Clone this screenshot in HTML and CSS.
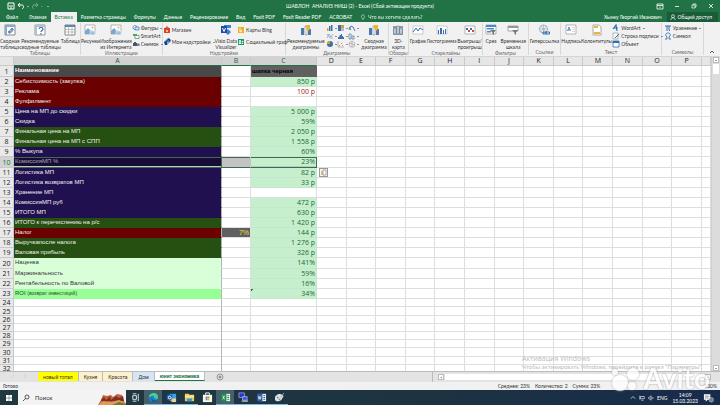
FILE: index.html
```html
<!DOCTYPE html>
<html lang="ru">
<head>
<meta charset="utf-8">
<title>ШАБЛОН АНАЛИЗ НИШ (2) - Excel</title>
<link rel="stylesheet" href="styles.css">
</head>
<body>
<svg class="sprite" aria-hidden="true">
  <symbol id="pivot" viewBox="0 0 12 12"><path d="M1 1h10v10H1z" fill="#fff" stroke="#888"/><path d="M1 1h10v2H1zM1 1h2v10H1z" fill="#8ea9c4"/><path d="M5 8h3V5M4 8l2-1.500v3zM8 4l-1.500 2h3z" fill="none" stroke="#2b6cb0" stroke-width=".8"/></symbol>
  <symbol id="pivotq" viewBox="0 0 12 12"><path d="M1 1h10v10H1z" fill="#fff" stroke="#999"/><path d="M1 1h10v2H1zM1 1h2v10H1z" fill="#b4c0cc"/><path d="M5 5c0-2 4-2 4 0 0 1.500-2 1.500-2 3M7 9v1.500" fill="none" stroke="#2b6cb0" stroke-width="1.200"/></symbol>
  <symbol id="table" viewBox="0 0 12 12"><path d="M1 1h10v10H1z" fill="#fff" stroke="#888"/><path d="M1 1h10v2H1z" fill="#4e86b8"/><path d="M1 5.500h10M1 8h10M4.500 1v10M8 1v10" stroke="#999" stroke-width=".6"/></symbol>
  <symbol id="picture" viewBox="0 0 12 12"><path d="M1 1h10v9H1z" fill="#fff" stroke="#999" stroke-width=".7"/><path d="M1 10V7l3-3 3 3 1-1 3 4z" fill="#7aa7cc"/><circle cx="8.500" cy="3.500" r="1" fill="#e6b450"/><path d="M6 7h5v4H6z" fill="#9cc3de" stroke="#fff" stroke-width=".5"/></symbol>
  <symbol id="shapes" viewBox="0 0 8 6"><circle cx="3" cy="2.500" r="2" fill="#fff" stroke="#3c7ab5" stroke-width=".7"/><path d="M3 2h4v3H3z" fill="#cde0f0" stroke="#3c7ab5" stroke-width=".7"/></symbol>
  <symbol id="smart" viewBox="0 0 8 6"><path d="M1 1h4v2H1z" fill="#5aa36f"/><path d="M3 2.500h4v3H3z" fill="#fff" stroke="#3c8a55" stroke-width=".7"/></symbol>
  <symbol id="camera" viewBox="0 0 8 6"><path d="M1 2h4v3H1zM2 1h2v1H2z" fill="#555"/><path d="M6 2v3M5 4h3" stroke="#2b6cb0"/></symbol>
  <symbol id="store" viewBox="0 0 8 8"><path d="M1 2h6v5H1z" fill="#d8432b"/><path d="M3 2V1h2v1" fill="none" stroke="#d8432b"/><path d="M3 4h2v2H3z" fill="#f3b59d"/></symbol>
  <symbol id="addin" viewBox="0 0 8 8"><path d="M1 4l3-3 3 3-3 3z" fill="#2d6cb5"/><path d="M4 1a2 2 0 013 3zM1 4h3v3H2z" fill="#173f7d"/><circle cx="5" cy="5" r="1" fill="#9cc7ef"/></symbol>
  <symbol id="visio" viewBox="0 0 12 12"><path d="M4 1h7v3H4zM8 5l3 3-3 3-3-3z" fill="#3f7fd0"/><path d="M1 2h6v7H1z" fill="#174ea6"/><path d="M2.500 4L4 7.500 5.500 4" fill="none" stroke="#fff"/></symbol>
  <symbol id="bing" viewBox="0 0 8 8"><path d="M1 1h6v6H1z" fill="#f2b01e"/><path d="M3 2v4l2-1-1-1" fill="none" stroke="#fff" stroke-width=".9"/></symbol>
  <symbol id="people" viewBox="0 0 8 8"><path d="M1 1h6v6H1z" fill="#159764"/><circle cx="3" cy="3" r="1" fill="#fff"/><circle cx="5.500" cy="3.500" r=".8" fill="#fff"/><path d="M2 6V4.500h2V6M5 6V5h1v1" fill="#fff" stroke="#fff" stroke-width=".4"/></symbol>
  <symbol id="chartrec" viewBox="0 0 12 12"><path d="M1 4h3v7H1z" fill="#4779b3"/><path d="M5 2h2v9H5z" fill="#fff" stroke="#666" stroke-width=".5"/><path d="M8 5h3v6H8z" fill="#4779b3"/><path d="M6 1h4v4L8 7 6 4z" fill="#edb43a"/></symbol>
  <symbol id="c1" viewBox="0 0 8 8"><path d="M1 4h1.500v3H1z" fill="#e09d31"/><path d="M3 2h1.500v5H3z" fill="#3c70ad"/><path d="M5 1h1.500v6H5z" fill="#3c70ad"/></symbol>
  <symbol id="c2" viewBox="0 0 8 8"><path d="M1 1h3v6H1z" fill="#3c70ad"/><path d="M4 1h3v3H4z" fill="#e09d31"/><path d="M4 4h3v3H4z" fill="#a7bfd9"/></symbol>
  <symbol id="c3" viewBox="0 0 8 8"><path d="M1 6l2-4 2 1 2 4M1 3l2 3" fill="none" stroke="#3c70ad" stroke-width=".9"/></symbol>
  <symbol id="c4" viewBox="0 0 8 8"><path d="M1 6l2-4 2 3 2-3M1 2l3 4 3 0" fill="none" stroke="#789abd" stroke-width=".7"/></symbol>
  <symbol id="c5" viewBox="0 0 8 8"><path d="M1 7V5h1.500V3H4V2h1v2h1v1h1v2z" fill="#3c70ad"/></symbol>
  <symbol id="c6" viewBox="0 0 8 8"><path d="M1 2h2v5H1zM4 4h2v3H4z" fill="#fff" stroke="#567ba1" stroke-width=".8"/></symbol>
  <symbol id="c7" viewBox="0 0 8 8"><circle cx="4" cy="4" r="3" fill="#3c70ad"/><path d="M4 4V1a3 3 0 00-3 3z" fill="#e09d31"/></symbol>
  <symbol id="c8" viewBox="0 0 8 8"><path d="M1 1v6h6" fill="none" stroke="#aaa" stroke-width=".8"/><path d="M2 5h1v1H2zM4 3h1v1H4zM5 5h1v1H5z" fill="#e09d31"/></symbol>
  <symbol id="c9" viewBox="0 0 8 8"><path d="M4 1l3 2-1 4H2L1 3zM4 1v6M1 3l6 2" fill="none" stroke="#999" stroke-width=".6"/></symbol>
  <symbol id="map3d" viewBox="0 0 12 12"><path d="M1 2h10v9H1z" fill="#8ca0af"/><path d="M2 4h2v6H2zM5 2h2v8H5zM8 4h2v6H8z" fill="#e7edf2" stroke="#5d7486" stroke-width=".6"/></symbol>
  <symbol id="line" viewBox="0 0 12 10"><path d="M1 1v8h10V1z" fill="#fff" stroke="#a9b3bb" stroke-width=".6"/><path d="M1 7l3-4 2 3 2-3 3 2" fill="none" stroke="#3c70ad"/></symbol>
  <symbol id="col" viewBox="0 0 12 10"><path d="M1 1h10v8H1z" fill="#fff" stroke="#a9b3bb" stroke-width=".6"/><path d="M2 5h1v4H2zM4 3h2v6H4zM7 5h1v4H7zM9 4h1v5H9z" fill="#3c70ad"/></symbol>
  <symbol id="winloss" viewBox="0 0 12 10"><path d="M1 1h10v8H1z" fill="#fff" stroke="#888" stroke-width=".6"/><path d="M2 3h2v2H2zM6 3h2v2H6z" fill="#3c70ad"/><path d="M4 5h2v2H4zM8 5h2v2H8z" fill="#d24b3a"/></symbol>
  <symbol id="slicer" viewBox="0 0 12 12"><path d="M1 1h10v9H1z" fill="#fff" stroke="#888" stroke-width=".6"/><path d="M1 1h10v2H1zM2 4h7v1.500H2zM2 7h4v1.500H2z" fill="#4d8ac5"/><path d="M5 6h6L9 8.500V11L7.500 10V8.500z" fill="#777"/></symbol>
  <symbol id="timeline" viewBox="0 0 12 12"><path d="M1 2h10v5H1z" fill="#fff" stroke="#777" stroke-width=".6"/><path d="M1 2h10v2H1z" fill="#8a9aa8"/><path d="M5 6h6L9 8.500V11L7.500 10V8.500z" fill="#777"/></symbol>
  <symbol id="link" viewBox="0 0 12 12"><circle cx="5.500" cy="5" r="4" fill="#fff" stroke="#8a9aa8" stroke-width=".8"/><path d="M1.500 5h8M5.500 1v8M3 2c2 2 2 4 0 6M8 2c-2 2-2 4 0 6" fill="none" stroke="#8a9aa8" stroke-width=".6"/><path d="M5 8h3v2H5zM8 8h3.500v2H8z" fill="none" stroke="#2e72b5"/></symbol>
  <symbol id="textbox" viewBox="0 0 12 12"><path d="M1 1h10v9H1z" fill="#fff" stroke="#999" stroke-width=".7"/><path d="M2.500 7L4 3l1.500 4M3 6h2" fill="none" stroke="#3c70ad" stroke-width=".8"/><path d="M7 3.500h3M7 5.500h3M7 7.500h3" stroke="#bbb" stroke-width=".6"/></symbol>
  <symbol id="hf" viewBox="0 0 12 12"><path d="M2 1h6l2 2v8H2z" fill="#fff" stroke="#888" stroke-width=".7"/><path d="M3 2h4v2H3zM3 8h6v2H3z" fill="#edb43a"/></symbol>
  <symbol id="wordart" viewBox="0 0 8 8"><path d="M1 5l3-4 1 6M2 4h4" fill="none" stroke="#2f6eb3" stroke-width="1.200"/></symbol>
  <symbol id="sign" viewBox="0 0 8 8"><path d="M1 1h5v6H1z" fill="#fff" stroke="#888" stroke-width=".6"/><path d="M3 6l4-4" stroke="#2f6eb3"/></symbol>
  <symbol id="object" viewBox="0 0 8 8"><path d="M1 1h6v6H1z" fill="#fff" stroke="#2f6eb3" stroke-width=".8"/><path d="M1 1h6v2H1z" fill="#2f6eb3"/></symbol>
  <symbol id="pi" viewBox="0 0 8 8"><path d="M1 2h6M3 2v5M5 2v4l1 1" fill="none" stroke="#2f6eb3"/></symbol>
  <symbol id="omega" viewBox="0 0 8 8"><path d="M1 7h2V5C0 2 3 1 4 1s4 1 1 4v2h2" fill="none" stroke="#2f6eb3" stroke-width=".9"/></symbol>
</svg>

<header class="top">
  <div class="titlebar">
    <div class="quick">
      <button aria-label="Сохранить"><svg viewBox="0 0 8 8"><path d="M1 1h6v6H1z" fill="none" stroke="#fff"/><path d="M2 4h4M3 6h2" stroke="#fff"/></svg></button>
      <button aria-label="Отменить"><svg viewBox="0 0 8 8"><path d="M3 1L1 3l2 2M1 3h4c2 0 2 3 0 4" fill="none" stroke="#fff"/></svg><i class="caret"></i></button>
      <button aria-label="Вернуть" class="dim"><svg viewBox="0 0 8 8"><path d="M5 1l2 2-2 2M7 3H3C1 3 1 6 3 7" fill="none" stroke="#fff"/></svg><i class="caret"></i></button>
      <button aria-label="Настройка"><i class="caret"></i></button>
    </div>
    <h1>ШАБЛОН&nbsp; АНАЛИЗ НИШ (2) - Excel (Сбой активации продукта)</h1>
    <div class="winbtns">
      <button aria-label="Параметры ленты"><svg viewBox="0 0 8 8"><path d="M1 2h6v5H1zM1 3.500h6M4 6V4.500" fill="none" stroke="#fff" stroke-width=".8"/></svg></button>
      <button aria-label="Свернуть"><svg viewBox="0 0 8 8"><path d="M2 4.500h4" stroke="#fff" stroke-width=".8"/></svg></button>
      <button aria-label="Развернуть"><svg viewBox="0 0 8 8"><path d="M2 3h3v3H2zM3 3V2h3v3H5" fill="none" stroke="#fff" stroke-width=".7"/></svg></button>
      <button aria-label="Закрыть"><svg viewBox="0 0 8 8"><path d="M2 2l4 4M6 2L2 6" stroke="#fff" stroke-width=".8"/></svg></button>
    </div>
  </div>
  <nav class="tabs">
    <button class="file">Файл</button><button>Главная</button><button class="on">Вставка</button><button>Разметка страницы</button><button>Формулы</button><button>Данные</button><button>Рецензирование</button><button>Вид</button><button>Foxit PDF</button><button>Foxit Reader PDF</button><button>ACROBAT</button>
    <button class="tell"><svg viewBox="0 0 8 8"><path d="M3 6C1 4 2 1 4 1s3 3 1 5zM3 7h2" fill="none" stroke="#fff" stroke-width=".7"/></svg>Что вы хотите сделать?</button>
    <span class="user">Хынку Георгий Иванович</span>
    <button class="share"><svg viewBox="0 0 8 8"><circle cx="4" cy="3" r="2" fill="none" stroke="#fff" stroke-width=".9"/><path d="M1 8c0-4 6-4 6 0" fill="none" stroke="#fff" stroke-width=".9"/></svg>Общий доступ</button>
  </nav>
</header>

<section class="ribbon" aria-label="Вставка">
  <div class="group g-tables"><div class="tools">
    <button class="big"><svg><use href="#pivot"/></svg>Сводная<br>таблица</button>
    <button class="big"><svg><use href="#pivotq"/></svg>Рекомендуемые<br>сводные таблицы</button>
    <button class="big"><svg><use href="#table"/></svg>Таблица</button>
  </div><p>Таблицы</p></div>
  <div class="group g-pics"><div class="tools">
    <button class="big"><svg><use href="#picture"/></svg>Рисунки</button>
    <button class="big"><svg><use href="#picture"/></svg>Изображения<br>из Интернета</button>
    <div class="stack"><button><svg><use href="#shapes"/></svg>Фигуры<i class="caret"></i></button><button><svg><use href="#smart"/></svg>SmartArt</button><button><svg><use href="#camera"/></svg>Снимок<i class="caret"></i></button></div>
  </div><p>Иллюстрации</p></div>
  <div class="group g-addins"><div class="tools">
    <div class="stack two"><button><svg><use href="#store"/></svg>Магазин</button><button><svg><use href="#addin"/></svg>Мои надстройки<i class="caret"></i></button></div>
    <button class="big"><svg><use href="#visio"/></svg>Visio Data<br>Visualizer</button>
    <div class="stack two"><button><svg><use href="#bing"/></svg>Карты Bing</button><button><svg><use href="#people"/></svg>Социальный граф</button></div>
  </div><p>Надстройки</p></div>
  <div class="group g-charts"><div class="tools">
    <button class="big"><svg><use href="#chartrec"/></svg>Рекомендуемые<br>диаграммы</button>
    <div class="minis">
      <button aria-label="Гистограмма"><svg><use href="#c1"/></svg><i class="caret"></i></button><button aria-label="Иерархия"><svg><use href="#c2"/></svg><i class="caret"></i></button><button aria-label="Каскад"><svg><use href="#c3"/></svg><i class="caret"></i></button>
      <button aria-label="График"><svg><use href="#c4"/></svg><i class="caret"></i></button><button aria-label="Статистика"><svg><use href="#c5"/></svg><i class="caret"></i></button><button aria-label="Комбинированная"><svg><use href="#c6"/></svg><i class="caret"></i></button>
      <button aria-label="Круговая"><svg><use href="#c7"/></svg><i class="caret"></i></button><button aria-label="Точечная"><svg><use href="#c8"/></svg><i class="caret"></i></button><button aria-label="Поверхность"><svg><use href="#c9"/></svg><i class="caret"></i></button>
    </div>
    <button class="big"><svg><use href="#chartrec"/></svg>Сводная<br>диаграмма</button>
  </div><p>Диаграммы</p></div>
  <div class="group g-tours"><div class="tools"><button class="big"><svg><use href="#map3d"/></svg>3D-<br>карта</button></div><p>Обзоры</p></div>
  <div class="group g-spark"><div class="tools">
    <button class="big"><svg><use href="#line"/></svg>График</button>
    <button class="big"><svg><use href="#col"/></svg>Гистограмма</button>
    <button class="big"><svg><use href="#winloss"/></svg>Выигрыш/<br>проигрыш</button>
  </div><p>Спарклайны</p></div>
  <div class="group g-filter"><div class="tools">
    <button class="big"><svg><use href="#slicer"/></svg>Срез</button>
    <button class="big"><svg><use href="#timeline"/></svg>Временная<br>шкала</button>
  </div><p>Фильтры</p></div>
  <div class="group g-link"><div class="tools"><button class="big"><svg><use href="#link"/></svg>Гиперссылка</button></div><p>Ссылки</p></div>
  <div class="group g-text"><div class="tools">
    <button class="big"><svg><use href="#textbox"/></svg>Надпись</button>
    <button class="big"><svg><use href="#hf"/></svg>Колонтитулы</button>
    <div class="stack"><button><svg><use href="#wordart"/></svg>WordArt<i class="caret"></i></button><button><svg><use href="#sign"/></svg>Строка подписи<i class="caret"></i></button><button><svg><use href="#object"/></svg>Объект</button></div>
  </div><p>Текст</p></div>
  <div class="group g-sym"><div class="tools">
    <div class="stack"><button><svg><use href="#pi"/></svg>Уравнение<i class="caret"></i></button><button><svg><use href="#omega"/></svg>Символ</button></div>
  </div><p>Символы</p></div>
  <button class="collapse" aria-label="Свернуть ленту"><svg viewBox="0 0 8 8"><path d="M2 5l2-2 2 2" fill="none" stroke="#555"/></svg></button>
</section>

<main class="sheet">
  <div class="cells"><table id="grid"></table></div>
  <div class="vscroll"><button aria-label="Вверх"><i class="caret up"></i></button><span class="thumb"></span><button class="down" aria-label="Вниз"><i class="caret"></i></button></div>
  <aside class="activate"><strong>Активация Windows</strong><span>Чтобы активировать Windows, перейдите в раздел "Параметры".</span></aside>
</main>

<nav class="sheets">
  <span class="arrows"><i>‹</i><i>›</i></span>
  <button class="yellow">новый тотал</button><button class="cream">Кухня</button><button class="cream">Красота</button><button class="blue">Дом</button><button class="current">юнит экономика</button>
  <button class="plus" aria-label="Новый лист"><svg viewBox="0 0 8 8"><circle cx="4" cy="4" r="3" fill="none" stroke="#777" stroke-width=".7"/><path d="M4 2.500v3M2.500 4h3" stroke="#666" stroke-width=".8"/></svg></button>
  <div class="hscroll"><button aria-label="Влево"><i class="caret left"></i></button><span></span><button aria-label="Вправо"><i class="caret right"></i></button></div>
</nav>

<footer class="status"><span>Готово</span><span class="sums"><span>Среднее: 23%</span><span>Количество: 2</span><span>Сумма: 23%</span></span><span class="zoomv">130%</span></footer>

<div class="taskbar">
  <button class="start" aria-label="Пуск"><svg viewBox="0 0 8 8"><path d="M1 1h2.800v2.800H1zM4.200 1H7v2.800H4.200zM1 4.200h2.800V7H1zM4.200 4.200H7V7H4.200z" fill="#fff"/></svg></button>
  <button class="search"><svg viewBox="0 0 8 8"><circle cx="5" cy="3" r="2" fill="none" stroke="#333" stroke-width=".8"/><path d="M3.500 4.500L1 7" stroke="#333" stroke-width=".8"/></svg>Поиск
    <svg class="rocks" viewBox="0 0 28 15"><path d="M0 15l3-5 2-5 4 1 4-1 2 2 4-3 5 1 2 6 2 4z" fill="#c5623b"/><path d="M3 10l3-3 2 3 4-4 1 4 5-4 3 2 4-2 1 5-7 1-8-1-6 2z" fill="#7d2f22"/><path d="M0 15l5-4 8 1 8-2 7 3v2z" fill="#e29a5b"/><path d="M14 15l7-3 7 2v1z" fill="#667a38"/></svg>
  </button>
  <button class="app" aria-label="Представление задач"><svg viewBox="0 0 12 12"><path d="M3 4h4v4H3zM3 2h4M3 10h4M9 2v8" fill="none" stroke="#e6edf0"/></svg></button>
  <button class="app open lit" aria-label="Edge"><svg viewBox="0 0 12 12"><circle cx="6" cy="6" r="5" fill="#1b83d2"/><path d="M1 6c0-6 10-7 10 0 0 2-4 2-4 0 0-3-4-2-6 0z" fill="#4bd089"/><path d="M4 6c0 3 3 4 6 3-3 4-7 1-6-3z" fill="#0d4f9e"/></svg></button>
  <button class="app open" aria-label="Outlook"><svg viewBox="0 0 12 12"><path d="M4 2h7v8H4z" fill="#39a5e8"/><path d="M1 3h6v6H1z" fill="#0f5fae"/><circle cx="4" cy="6" r="1.500" fill="none" stroke="#fff"/><path d="M6 7h5v4H6z" fill="#f0cf93"/></svg></button>
  <button class="app open" aria-label="Проводник"><svg viewBox="0 0 12 12"><path d="M1 2h4l1 1h5v7H1z" fill="#f7cf55"/><path d="M3 7h6v3H3z" fill="#3c91d9"/><path d="M1 4h10v2H1z" fill="#fbe49b"/></svg></button>
  <button class="app" aria-label="Store"><svg viewBox="0 0 12 12"><path d="M4 3V1h4v2" fill="none" stroke="#fff"/><path d="M1 3h10v8H1z" fill="#f4f6f8"/><path d="M4 5h2v2H4z" fill="#e5532d"/><path d="M6 5h2v2H6z" fill="#6db33f"/><path d="M4 7h2v2H4z" fill="#2f9ae0"/><path d="M6 7h2v2H6z" fill="#f2b41e"/></svg></button>
  <button class="app open lit" aria-label="Excel"><svg viewBox="0 0 12 12"><path d="M6 2h5v8H6z" fill="#e9f4ec"/><path d="M8 4h2M8 6h2M8 8h2" stroke="#217346"/><path d="M1 2l6-1v10l-6-1z" fill="#1e8a4d"/><path d="M3 4l2 4M5 4L3 8" stroke="#fff" stroke-width=".8"/></svg></button>
  <button class="app open" aria-label="Удалённый рабочий стол"><svg viewBox="0 0 12 12"><path d="M1 1h6v5H1z" fill="#2437d0" stroke="#cfd8e0" stroke-width=".6"/><path d="M5 5h5v4H5z" fill="#3b52e2" stroke="#dde5eb" stroke-width=".6"/><path d="M4 10h7" stroke="#dfe6ea"/></svg></button>
  <button class="app open" aria-label="Word"><svg viewBox="0 0 12 12"><path d="M6 2h5v8H6z" fill="#eef3fa"/><path d="M8 4h2M8 6h2M8 8h2" stroke="#2b5797"/><path d="M1 2l6-1v10l-6-1z" fill="#2b5797"/><path d="M2.500 4l.8 4L4 5l.8 3 .8-4" fill="none" stroke="#fff" stroke-width=".7"/></svg></button>
  <button class="app open" aria-label="Paint"><svg viewBox="0 0 12 12"><path d="M1 7c0-4 5-6 8-4s0 3 0 4-3 4-6 3c-1 0-2-1-2-3z" fill="#dbe3e6"/><circle cx="4" cy="6" r="1" fill="#4c9bd6"/><circle cx="6" cy="8" r="1" fill="#d86b4a"/><path d="M7 6l4-5" stroke="#9aa7ad"/></svg></button>
  <div class="tray">
    <svg viewBox="0 0 8 8"><path d="M1 5l3-3 3 3" fill="none" stroke="#fff" stroke-width=".9"/></svg>
    <svg viewBox="0 0 8 8"><path d="M2 2h5v3H2zM1 1v5M3 7h3" fill="none" stroke="#fff" stroke-width=".8"/></svg>
    <svg viewBox="0 0 8 8"><path d="M1 3h1l2-2v6L2 5H1zM5 3l2 2M7 3L5 5" fill="none" stroke="#fff" stroke-width=".8"/></svg>
    <span>ENG</span><time>14:09<br>15.03.2023</time>
    <svg class="note" viewBox="0 0 12 10"><path d="M1 1h7v6H5L3 9V7H1z" fill="#fff"/><path d="M2 3h5M2 5h4" stroke="#17334a" stroke-width=".6"/><circle cx="9" cy="7" r="2.500" fill="#6a7d88" stroke="#dce3e7" stroke-width=".5"/></svg>
  </div>
</div>

<div class="mark" aria-hidden="true"><svg viewBox="0 0 30 30"><circle cx="11" cy="20" r="8"/><circle cx="24" cy="11" r="6"/><circle cx="6" cy="9" r="3"/><circle cx="23" cy="23" r="4"/></svg><span>Avito</span></div>
<script src="grid.js"></script>
</body>
</html>
```
FILE: styles.css
```css
* { box-sizing: border-box; }
body { margin: 0; height: 100vh; display: flex; flex-direction: column; overflow: hidden; position: relative; background: #fff; color: #333; font: 5px/6px Lato, Roboto, sans-serif; }
button { margin: 0; padding: 0; border: 0; background: none; color: inherit; font: inherit; display: flex; align-items: center; }
h1, p { margin: 0; font: inherit; }
svg { display: block; flex: none; width: 8px; height: 8px; }
.sprite { display: none; }
.caret { width: 0; height: 0; margin-left: 2px; border: 1px solid transparent; border-top-color: currentColor; border-bottom: 0; }

.top { background: #217346; color: #fff; }
.titlebar { height: 12px; display: grid; grid-template-columns: 1fr auto 1fr; align-items: center; }
.quick { display: flex; gap: 2px; padding-left: 7px; }
.quick .dim { opacity: .4; }
.winbtns { display: flex; justify-content: flex-end; gap: 9px; padding-right: 5px; }
.tabs { height: 10px; display: flex; }
.tabs button { padding: 0 4px; white-space: nowrap; }
.tabs .file { padding: 0 7px 0 6px; }
.tabs .on { background: #f1f1f1; color: #217346; }
.tabs .tell { gap: 2px; opacity: .85; }
.tabs svg { width: 6px; height: 6px; }
.tabs .user { margin-left: auto; padding-right: 5px; align-self: center; white-space: nowrap; }
.tabs .share { background: #1a5c38; gap: 2px; padding: 0 6px 0 3px; margin-right: 2px; }

.ribbon { height: 35px; flex: none; display: flex; background: #f1f1f1; border-bottom: 1px solid #d4d4d4; }
.group { min-width: 0; display: flex; flex-direction: column; border-right: 1px solid #d8d8d8; margin: 1px 0; white-space: nowrap; }
.group p { text-align: center; color: #666; }
.tools { flex: 1; display: flex; justify-content: space-around; padding-top: 1px; }
.big { flex-direction: column; text-align: center; }
.big svg { width: 12px; height: 12px; margin-bottom: 2px; }
.stack { display: flex; flex-direction: column; }
.stack.two { gap: 4px; padding-top: 2px; }
.stack svg { margin-right: 1px; }
.minis { display: grid; grid-template-columns: repeat(3, 11px); grid-auto-rows: 8px; }
.minis .caret { margin-left: 1px; }
.g-tables { flex: 81 1 0; }
.g-pics { flex: 82 1 0; }
.g-addins { flex: 124 1 0; }
.g-charts { flex: 103 1 0; }
.g-tours { flex: 20 1 0; }
.g-spark { flex: 74 1 0; }
.g-filter { flex: 45 1 0; }
.g-link { flex: 32 1 0; }
.g-text { flex: 101 1 0; }
.g-sym { flex: 42 1 0; }
.collapse { flex: 16 1 0; align-self: flex-end; justify-content: center; }

.sheet { flex: 1; min-height: 0; display: flex; position: relative; background: #fff; }
.cells { flex: 1; min-width: 0; overflow: hidden; }
table { width: 100%; table-layout: fixed; border-collapse: separate; border-spacing: 0; color: #222; font: 6px/8px "Liberation Sans", sans-serif; }
th, td { padding: 0; height: 10px; border: 0 solid #dedede; border-width: 0 1px 1px 0; white-space: nowrap; line-height: 8px; }
thead th { height: 9px; background: #e6e6e6; border-color: #c9c9c9; font: 7px/8px "Open Sans", sans-serif; }
thead .sel { background: #d2d2d2; border-bottom-color: #217346; color: #2b5f42; }
tbody th { background: #e9e9e9; border-color: #c9c9c9; font: 7px/8px "Open Sans", sans-serif; vertical-align: bottom; }
tbody td:nth-child(2) { border-right-color: #b5b5b5; }
.tall > * { height: 11px; }
.low > * { height: 8px; line-height: 7px; }
.low.tall > * { height: 9px; }
.c-head { width: 14px; }
.c-a { width: 208px; }
.c-b { width: 29px; }
.c-c { width: 66px; }
.c-end { width: 9px; }
.name { padding-left: 1px; vertical-align: top; color: #f0f0f0; border-bottom-color: transparent; }
.value { position: relative; padding-right: 1px; text-align: right; font: 7px/8px "Open Sans", sans-serif; color: #1c6b33; background: #c6efce; border-color: #c6e6cb; }
.plain { background: #fff; border-color: #dedede; color: #a01c1c; }
.black { background: #484848; color: #fff; font-weight: bold; }
.cap { padding-left: 1px; background: #606060; color: #000; font: bold 6px/8px "Liberation Sans", sans-serif; text-align: left; border-color: #606060; }
.red { background: #6b0000; }
.navy { background: #21104f; }
.green { background: #264f12; }
.mint { background: #d9ffd9; color: #333; }
.lime { background: #96ff96; color: #2b4a2b; }
.flag { background: linear-gradient(135deg, #217346 2px, #c6efce 2px); }
.tax { background: #606060; color: #e8e02c; font-size: 7px; text-align: right; padding-right: 1px; }
.picked th { background: #d2d2d2; color: #217346; }
.picked .navy { background: #180b38; color: #aaa; }
.picked .name, .picked .mid, .picked .value { border-color: #3d6b50; box-shadow: inset 0 1px #3d6b50, inset 0 -1px #bcc8c4; }
.picked .mid { background: #c3c3c3; border-right-color: #c3c3c3; }
small { font-size: 5px; }
.paste { position: absolute; z-index: 1; left: 68px; top: 0; width: 9px; height: 9px; border: 1px solid #999; background: #f4f4f4; }
.paste svg { width: 7px; height: 7px; }
.vscroll { width: 9px; display: flex; flex-direction: column; align-items: center; background: #dcdcdc; border-left: 1px solid #cfcfcf; }
.vscroll button, .hscroll button { width: 6px; height: 6px; justify-content: center; background: #fff; border: 1px solid #bbb; flex: none; }
.vscroll .caret, .hscroll .caret { margin: 0; }
.caret.up { transform: rotate(180deg); }
.caret.left { transform: rotate(90deg); }
.caret.right { transform: rotate(270deg); }
.vscroll .thumb { width: 6px; height: 10px; background: #fff; margin-top: 1px; }
.vscroll .down { margin-top: auto; }
.activate { position: absolute; left: 522px; bottom: 0; display: flex; flex-direction: column; color: #bbb; font: 6px/8px Lato, sans-serif; white-space: nowrap; }
.activate strong { font: 7px/8px "Open Sans", sans-serif; }

.sheets { height: 11px; flex: none; display: flex; background: #e3e3e3; border-top: 1px solid #bbb; font: 5px/6px Roboto, sans-serif; color: #333; }
.sheets > button { padding: 0 5px; border-right: 1px solid #bbb; white-space: nowrap; height: 9px; }
.arrows { width: 38px; display: flex; justify-content: space-around; padding: 0 7px; color: #aaa; }
.arrows i { font-style: normal; }
.sheets .yellow { background: #ff0; }
.sheets .cream { background: #fdf0cf; }
.sheets .blue { background: #d5e5f3; }
.sheets .current { background: #fff; color: #217346; font-weight: bold; border-bottom: 1px solid #217346; }
.sheets .plus { border: 0; padding: 0 11px; }
.hscroll { margin-left: auto; width: 40%; padding: 1px 9px 1px 5px; display: flex; align-items: center; gap: 1px; border-left: 1px solid #bbb; }
.hscroll span { flex: 1; height: 6px; background: #fff; }
.status { height: 8px; flex: none; display: flex; align-items: center; padding: 0 3px; background: #f1f1f1; }
.sums { margin-left: auto; margin-right: 104px; display: flex; gap: 5px; }

.taskbar { height: 15px; flex: none; display: flex; background: linear-gradient(90deg, #20383f, #1d3342 60%, #172b4c); color: #fff; }
.start { width: 18px; justify-content: center; }
.search { width: 108px; gap: 5px; padding-left: 4px; background: #f3f3f3; color: #333; font: 6px/7px Roboto, sans-serif; }
.search .rocks { width: 28px; height: 15px; margin-left: auto; }
.app { width: 18px; justify-content: center; border-bottom: 1px solid transparent; }
.app svg { width: 11px; height: 11px; }
.open { border-bottom-color: #76b9ed; }
.lit { background: #46606b; }
.tray { margin-left: auto; padding-right: 6px; display: flex; align-items: center; gap: 3px; }
.tray svg { width: 6px; height: 6px; }
.tray time { text-align: center; margin: 0 2px; }
.tray .note { width: 11px; height: 10px; }

.mark { position: absolute; right: 10px; bottom: 12px; display: flex; align-items: center; gap: 4px; color: #fff; opacity: .75; font: bold 28px/26px Lato, sans-serif; text-shadow: 0 0 2px #777; }
.mark svg { width: 30px; height: 30px; fill: #fff; filter: drop-shadow(0 0 1px #999); }
```
FILE: grid.js
```js
const columns = 'ABCDEFGHIJKLMNOP'.split('');
const rows = [
  ['Наименование', 'black', 'шапка черная', 'cap'],
  ['Себистоимость (закупка)', 'red', '850 р'],
  ['Реклама', 'red', '100 р', 'plain'],
  ['Фулфилмент', 'red', '', 'plain'],
  ['Цена на МП до скидки', 'navy', '5 000 р'],
  ['Скидка', 'navy', '59%'],
  ['Финальная цена на МП', 'green', '2 050 р'],
  ['Финальная цена на МП с СПП', 'green', '1 558 р'],
  ['% Выкупа', 'navy', '60%'],
  ['КомиссияМП %', 'navy', '23%'],
  ['Логистика МП', 'navy', '82 р'],
  ['Логистика возвратов МП', 'navy', '33 р'],
  ['Хранение МП', 'navy', '', 'plain'],
  ['КомиссияМП руб', 'navy', '472 р'],
  ['ИТОГО МП', 'navy', '630 р'],
  ['ИТОГО к перечислению на р/с', 'green', '1 420 р'],
  ['Налог', 'red', '144 р'],
  ['Выручкапосле налога', 'green', '1 276 р'],
  ['Валовая прибыль', 'green', '326 р'],
  ['Наценка', 'mint', '141%'],
  ['Маржинальность', 'mint', '59%'],
  ['Рентабельность по Валовой', 'mint', '16%'],
  ['ROI <small>(возврат инвестиций)</small>', 'lime', '34%', 'flag']
];
const paste = '<span class="paste"><svg viewBox="0 0 7 7"><path d="M1 2h3v4H1z" fill="#e3c48a"/><path d="M3 1h3v5H3z" fill="#fff" stroke="#777" stroke-width=".6"/></svg></span>';
const widths = { A: 'c-a sel', B: 'c-b sel', C: 'c-c sel' };

let html = '<thead><tr><th class="c-head"></th>' +
  columns.map(c => `<th class="${widths[c] || ''}">${c}</th>`).join('') +
  '<th class="c-end"></th></tr></thead><tbody>';
for (let n = 1; n <= 32; n++) {
  const row = rows[n - 1];
  const kind = [];
  if (!row) kind.push('low');
  if ([1, 10, 20, 25, 30].includes(n)) kind.push('tall');
  if (n === 10) kind.push('picked');
  html += `<tr class="${kind.join(' ')}"><th>${n}</th>`;
  if (row) {
    html += `<td class="name ${row[1]}">${row[0]}</td>`;
    html += n === 17 ? '<td class="tax">7%</td>' : '<td class="mid"></td>';
    html += `<td class="value ${row[3] || ''}">${row[2]}${n === 11 ? paste : ''}</td>`;
  } else {
    html += '<td></td><td></td><td></td>';
  }
  html += '<td></td>'.repeat(14) + '</tr>';
}
document.getElementById('grid').innerHTML = html + '</tbody>';
```
